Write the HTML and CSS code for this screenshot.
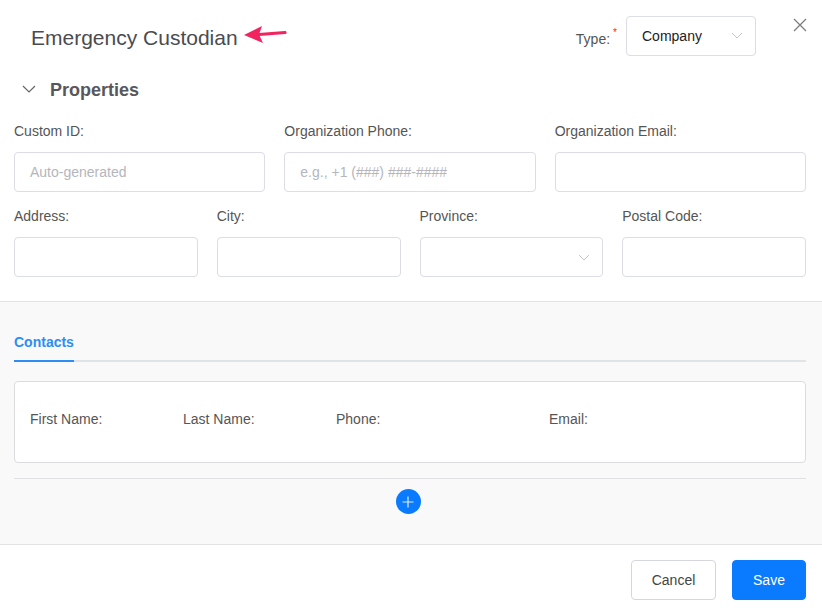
FILE: index.html
```html
<!DOCTYPE html>
<html>
<head>
<meta charset="utf-8">
<link rel="stylesheet" href="styles.css">
</head>
<body>
<div class="modal">
  <div class="top">
    <header class="header">
      <div class="title-wrap">
        <h1 class="title">Emergency Custodian</h1>
        <svg class="arrow" width="44" height="22" viewBox="0 0 44 22">
          <path d="M42 9.5 L16 11.5" stroke="#f2245f" stroke-width="3.2" stroke-linecap="round" fill="none"/>
          <path d="M1 12 L19 3 L16 11.5 L20 20 Z" fill="#f2245f"/>
        </svg>
      </div>
      <div class="type-group">
        <span class="type-label">Type:<span class="req">*</span></span>
        <div class="select type-select">
          <span class="select-value">Company</span>
          <svg class="chev" width="12" height="7" viewBox="0 0 12 7"><path d="M1 1 L6 6 L11 1" stroke="#c3c6ce" stroke-width="1" fill="none"/></svg>
        </div>
      </div>
      <svg class="close" width="14" height="14" viewBox="0 0 14 14"><path d="M1 1 L13 13 M13 1 L1 13" stroke="#7d7d7d" stroke-width="1.3" fill="none"/></svg>
    </header>

    <div class="section-head">
      <svg class="sec-chev" width="14" height="8" viewBox="0 0 14 8"><path d="M1 1 L7 7 L13 1" stroke="#666" stroke-width="1.2" fill="none"/></svg>
      <span class="section-title">Properties</span>
    </div>

    <div class="form">
      <div class="row row3">
        <div class="field">
          <label class="label">Custom ID:</label>
          <div class="input"><span class="ph">Auto-generated</span></div>
        </div>
        <div class="field">
          <label class="label">Organization Phone:</label>
          <div class="input"><span class="ph">e.g., +1 (###) ###-####</span></div>
        </div>
        <div class="field">
          <label class="label">Organization Email:</label>
          <div class="input"></div>
        </div>
      </div>
      <div class="row row4">
        <div class="field">
          <label class="label">Address:</label>
          <div class="input"></div>
        </div>
        <div class="field">
          <label class="label">City:</label>
          <div class="input"></div>
        </div>
        <div class="field">
          <label class="label">Province:</label>
          <div class="input select">
            <span></span>
            <svg class="chev" width="12" height="7" viewBox="0 0 12 7"><path d="M1 1 L6 6 L11 1" stroke="#c3c6ce" stroke-width="1" fill="none"/></svg>
          </div>
        </div>
        <div class="field">
          <label class="label">Postal Code:</label>
          <div class="input"></div>
        </div>
      </div>
    </div>
  </div>

  <div class="contacts">
    <div class="tabs">
      <span class="tab active">Contacts</span>
    </div>
    <div class="card">
      <span class="clabel">First Name:</span>
      <span class="clabel">Last Name:</span>
      <span class="clabel">Phone:</span>
      <span class="clabel">Email:</span>
    </div>
    <div class="divider"></div>
    <div class="add-row">
      <button class="add-btn" aria-label="Add">
        <svg width="12" height="12" viewBox="0 0 12 12"><path d="M6 0.5 V11.5 M0.5 6 H11.5" stroke="#fff" stroke-width="1.2" fill="none" opacity="0.85"/></svg>
      </button>
    </div>
  </div>

  <footer class="footer">
    <button class="btn btn-cancel">Cancel</button>
    <button class="btn btn-save">Save</button>
  </footer>
</div>
</body>
</html>
```

FILE: styles.css
```css
* { box-sizing: border-box; }
html, body { margin: 0; padding: 0; background: #fff; }
body {
  font-family: "Liberation Sans", Arial, Helvetica, sans-serif;
  color: #555;
  font-size: 14px;
  width: 822px;
  height: 610px;
  overflow: hidden;
}
.modal { width: 822px; }

.top { border-bottom: 1px solid #e3e3e6; }

.header {
  display: flex;
  align-items: center;
  padding: 16px 14px 0 31px;
  height: 55px;
  position: relative;
}
.title-wrap { display: flex; align-items: center; flex: 1; }
.title {
  margin: 0;
  font-size: 21px;
  font-weight: normal;
  color: #4b4b4f;
  line-height: 24px;
  margin-top: 4px;
}
.arrow { margin-left: 5px; margin-top: -4px; }

.type-group { display: flex; align-items: center; margin-top: 0; margin-right: 52px; }
.type-label { font-size: 14px; color: #555; margin-right: 9px; position: relative; padding-top: 6px; }
.req { color: #f5222d; font-size: 10px; position: relative; top: -8px; margin-left: 3px; }
.select {
  display: flex;
  align-items: center;
  justify-content: space-between;
}
.type-select {
  width: 130px;
  height: 40px;
  border: 1px solid #dcdde5;
  border-radius: 4px;
  padding: 0 12px 0 15px;
}
.select-value { color: #222; font-size: 14px; }
.close { position: absolute; right: 15px; top: 18px; }

.section-head {
  display: flex;
  align-items: center;
  padding-left: 22px;
  margin-top: 23px;
  height: 24px;
}
.sec-chev { margin-right: 14px; margin-top: -2px; }
.section-title { font-size: 18px; font-weight: bold; color: #58585c; }

.form { padding: 19px 16px 24px 14px; }
.row { display: grid; column-gap: 19px; }
.row3 { grid-template-columns: repeat(3, 1fr); }
.row4 { grid-template-columns: repeat(4, 1fr); margin-top: 14px; }
.field { display: flex; flex-direction: column; }
.label { line-height: 20px; font-size: 14px; color: #555; margin-bottom: 11px; }
.input {
  height: 40px;
  border: 1px solid #dcdde5;
  border-radius: 4px;
  padding: 0 15px;
  display: flex;
  align-items: center;
}
.input.select { padding: 0 12px 0 15px; }
.ph { color: #b4b6bd; font-size: 14px; }

.contacts {
  background: #f9f9f9;
  padding: 30px 16px 0 14px;
  height: 243px;
  border-bottom: 1px solid #e3e3e6;
}
.tabs {
  border-bottom: 2px solid #e0e3e8;
  display: flex;
  height: 30px;
}
.tab {
  font-size: 14px;
  font-weight: bold;
  color: #2e8df5;
  line-height: 20px;
  height: 30px;
  border-bottom: 2px solid #2e8df5;
  margin-bottom: -2px;
}
.card {
  margin-top: 19px;
  height: 82px;
  background: #fff;
  border: 1px solid #dcdcdf;
  border-radius: 4px;
  display: grid;
  grid-template-columns: 153px 153px 213px 1fr;
  align-items: center;
  padding: 0 15px 6px 15px;
}
.clabel { font-size: 14px; color: #555; }
.divider { margin-top: 15px; border-top: 1px solid #e0e0e3; }
.add-row { display: flex; justify-content: center; padding-top: 10px; padding-right: 4px; }
.add-btn {
  width: 25px;
  height: 25px;
  border-radius: 50%;
  border: none;
  background: #0a7bff;
  padding: 0;
  display: flex;
  align-items: center;
  justify-content: center;
}

.footer {
  display: flex;
  justify-content: flex-end;
  gap: 16px;
  padding: 15px 16px 0 0;
}
.btn {
  height: 40px;
  border-radius: 4px;
  font-family: "Liberation Sans", Arial, sans-serif;
  font-size: 14px;
  padding: 0;
}
.btn-cancel {
  width: 85px;
  background: #fff;
  border: 1px solid #d6d7de;
  color: #444;
}
.btn-save {
  width: 74px;
  background: #0a7bff;
  border: 1px solid #0a7bff;
  color: #fff;
}
```
